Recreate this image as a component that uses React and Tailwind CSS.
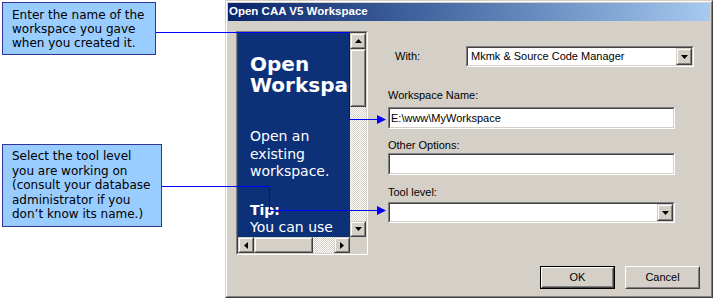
import React from 'react';

// Windows-classic bevels
function Raised({ className = '', children }) {
  return (
    <div className={`border border-t-[#d4d0c8] border-l-[#d4d0c8] border-r-[#404040] border-b-[#404040] bg-[#d4d0c8] ${className}`}>
      <div className="flex h-full w-full items-center justify-center border border-t-white border-l-white border-r-[#808080] border-b-[#808080]">
        {children}
      </div>
    </div>
  );
}

function Sunken({ className = '', children }) {
  return (
    <div className={`border border-t-[#808080] border-l-[#808080] border-r-white border-b-white ${className}`}>
      <div className="flex h-full w-full items-center border border-t-[#404040] border-l-[#404040] border-r-[#d4d0c8] border-b-[#d4d0c8] bg-white">
        {children}
      </div>
    </div>
  );
}

function Arrow({ dir }) {
  const pts = {
    up: '0,4 7,4 3.5,0',
    down: '0,0 7,0 3.5,4',
    left: '4,0 4,7 0,3.5',
    right: '0,0 0,7 4,3.5',
  }[dir];
  const vertical = dir === 'up' || dir === 'down';
  return (
    <svg width={vertical ? 7 : 4} height={vertical ? 4 : 7} viewBox={vertical ? '0 0 7 4' : '0 0 4 7'}>
      <polygon points={pts} fill="#000" />
    </svg>
  );
}

function Combo({ className = '', value }) {
  return (
    <Sunken className={className}>
      <span className="flex-1 truncate pl-[3px]">{value}</span>
      <Raised className="h-full w-[16px]">
        <Arrow dir="down" />
      </Raised>
    </Sunken>
  );
}

function Callout({ className = '', lines }) {
  return (
    <div className={`border border-[#33339a] bg-[#99ccff] pl-[9px] font-['DejaVu_Sans',sans-serif] text-[12px] text-black ${className}`}>
      {lines.map((l) => (
        <div key={l} className="whitespace-nowrap">{l}</div>
      ))}
    </div>
  );
}

const checker = 'bg-[repeating-conic-gradient(#d4d0c8_0%_25%,#ffffff_0%_50%)] bg-[length:2px_2px]';

export default function App() {
  return (
    <div className="relative flex h-[303px] w-[714px] overflow-hidden bg-white">
      <div className="flex w-[225px] shrink-0 flex-col">
        <Callout
          className="ml-[2px] mt-[2px] h-[53px] w-[154px] pt-[5px] leading-[14px]"
          lines={['Enter the name of the', 'workspace you gave', 'when you created it.']}
        />
        <Callout
          className="ml-[2px] mt-[89px] h-[83px] w-[160px] pt-[4px] leading-[14.5px]"
          lines={['Select the tool level', 'you are working on', '(consult your database', 'administrator if you', 'don’t know its name.)']}
        />
      </div>

      <div className="h-[298px] w-[488px] shrink-0 border border-t-[#d4d0c8] border-l-[#d4d0c8] border-r-[#404040] border-b-[#404040] bg-[#d4d0c8]">
        <div className="flex h-full flex-col border border-t-white border-l-white border-r-[#808080] border-b-[#808080] p-px font-['Liberation_Sans',Arial,sans-serif] text-[11px] text-black">
          <div className="flex h-[18px] shrink-0 items-center bg-linear-to-r from-[#0a246a] to-[#a6caf0] pl-[1px] text-[11.5px] font-bold text-white">
            Open CAA V5 Workspace
          </div>

          <div className="flex flex-1">
            {/* wizard picture pane */}
            <div className="ml-[8px] mt-[10px] h-[224px] w-[132px] shrink-0 border border-t-[#808080] border-l-[#808080] border-r-white border-b-white">
              <div className="grid h-full grid-cols-[112px_16px] grid-rows-[204px_16px] border border-t-[#404040] border-l-[#404040] border-r-[#d4d0c8] border-b-[#d4d0c8]">
                <div className="overflow-hidden whitespace-nowrap bg-[#0d3179] pl-[12px] pt-[21px] font-['DejaVu_Sans',sans-serif] text-white">
                  <div className="text-[20px] font-bold leading-[21px]">Open</div>
                  <div className="text-[20px] font-bold leading-[21px]">Workspace</div>
                  <div className="mt-[32px] text-[14px] leading-[17.5px]">
                    <div>Open an</div>
                    <div>existing</div>
                    <div>workspace.</div>
                  </div>
                  <div className="mt-[21px] text-[14px] leading-[17.5px]">
                    <div className="font-bold">Tip:</div>
                    <div>You can use</div>
                  </div>
                </div>
                <div className="flex flex-col">
                  <Raised className="h-[16px] shrink-0"><Arrow dir="up" /></Raised>
                  <Raised className="h-[58px] shrink-0" />
                  <div className={`flex-1 ${checker}`} />
                  <Raised className="h-[16px] shrink-0"><Arrow dir="down" /></Raised>
                </div>
                <div className="flex">
                  <Raised className="w-[16px] shrink-0"><Arrow dir="left" /></Raised>
                  <Raised className="w-[59px] shrink-0" />
                  <div className={`flex-1 ${checker}`} />
                  <Raised className="w-[16px] shrink-0"><Arrow dir="right" /></Raised>
                </div>
                <div className="bg-[#d4d0c8]" />
              </div>
            </div>

            {/* form */}
            <div className="ml-[20px] flex flex-1 flex-col pt-[25px]">
              <div className="mr-[16px] flex h-[21px] items-center">
                <span className="w-[78px] pl-[7px]">With:</span>
                <Combo className="h-full flex-1" value="Mkmk & Source Code Manager" />
              </div>

              <div className="mt-[22px] leading-[13px]">Workspace Name:</div>
              <Sunken className="mt-[5px] h-[22px] w-[287px]">
                <span className="pl-[1px]">E:\www\MyWorkspace</span>
              </Sunken>

              <div className="mt-[10px] leading-[13px]">Other Options:</div>
              <Sunken className="mt-[1px] h-[22px] w-[287px]" />

              <div className="mt-[11px] leading-[13px]">Tool level:</div>
              <Combo className="mt-[3px] h-[21px] w-[287px]" value="" />

              <div className="mr-[10px] mt-[43px] flex justify-end gap-[10px]">
                <div className="h-[23px] w-[75px] border border-black">
                  <div className="flex h-full items-center justify-center border border-t-white border-l-white border-r-[#404040] border-b-[#404040]">
                    <div className="flex h-full w-full items-center justify-center border border-t-[#d4d0c8] border-l-[#d4d0c8] border-r-[#808080] border-b-[#808080]">OK</div>
                  </div>
                </div>
                <div className="h-[23px] w-[75px] border border-t-white border-l-white border-r-[#404040] border-b-[#404040]">
                  <div className="flex h-full items-center justify-center border border-t-[#d4d0c8] border-l-[#d4d0c8] border-r-[#808080] border-b-[#808080]">Cancel</div>
                </div>
              </div>
            </div>
          </div>
        </div>
      </div>

      {/* callout leader lines */}
      <svg className="pointer-events-none absolute left-0 top-0" width="714" height="303">
        <path d="M156 32.5 H349.5 V119.5 H378" stroke="#0000ff" fill="none" />
        <polygon points="377,115 386,119.5 377,124" fill="#0000ff" />
        <path d="M162 186.5 H269.5 V210.5 H378" stroke="#0000ff" fill="none" />
        <polygon points="377,206 386,210.5 377,215" fill="#0000ff" />
      </svg>
    </div>
  );
}
